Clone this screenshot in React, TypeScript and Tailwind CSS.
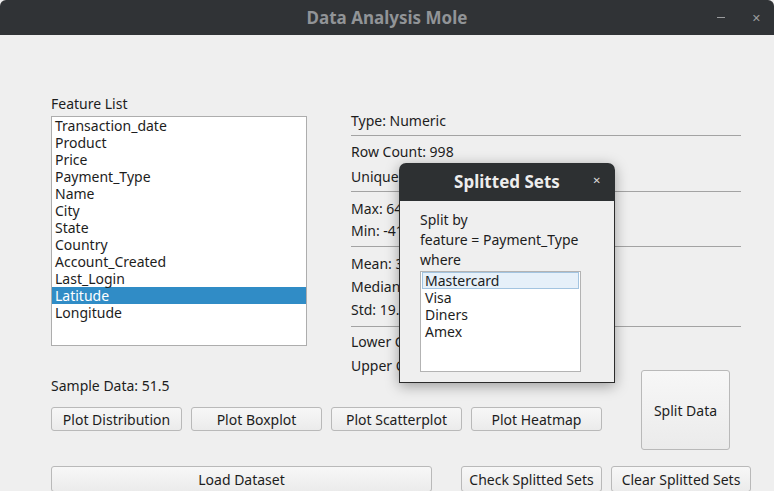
import React from 'react';

const features = [
  'Transaction_date',
  'Product',
  'Price',
  'Payment_Type',
  'Name',
  'City',
  'State',
  'Country',
  'Account_Created',
  'Last_Login',
  'Latitude',
  'Longitude',
];

const paymentTypes = ['Mastercard', 'Visa', 'Diners', 'Amex'];

const font = { fontFamily: '"Noto Sans", "DejaVu Sans", sans-serif' };

const Btn: React.FC<{ className?: string; children: React.ReactNode }> = ({ className = '', children }) => (
  <button
    className={`flex shrink-0 items-center justify-center rounded-[3px] border border-[#b9b9b9] bg-gradient-to-b from-[#f7f7f7] to-[#ebebeb] text-[14px] text-[#1d1d1d] ${className}`}
  >
    {children}
  </button>
);

const Sep: React.FC<{ className?: string }> = ({ className = '' }) => (
  <div className={`h-px w-full bg-[#a3a3a3] ${className}`} />
);

const App: React.FC = () => {
  return (
    <div className="flex h-[491px] w-[774px] flex-col overflow-hidden bg-[#efefef] text-[14px] text-[#1d1d1d]" style={font}>
      {/* Title bar */}
      <div className="relative flex h-[35px] shrink-0 items-center justify-center rounded-t-[6px] bg-[#303336]">
        <span className="text-[17px] font-bold text-[#919497]">Data Analysis Mole</span>
        <div className="absolute right-[13px] top-0 flex h-[35px] items-center gap-[27px]">
          <div className="h-px w-[8px] bg-[#9a9c9e]" />
          <span className="text-[11px] leading-none text-[#9a9c9e]">✕</span>
        </div>
      </div>

      {/* Body */}
      <div className="relative flex-1 pl-[51px]">
        {/* Top row */}
        <div className="mt-[59px] flex h-[276px] items-start">
          <div className="flex w-[256px] flex-col">
            <div className="h-[20px] leading-[20px]">Feature List</div>
            <div className="mt-[2px] h-[230px] border border-[#adadad] bg-white">
              {features.map((f) => (
                <div
                  key={f}
                  className={`h-[17px] pl-[3px] leading-[17px] ${f === 'Latitude' ? 'bg-[#308cc6] text-white' : ''}`}
                >
                  {f}
                </div>
              ))}
            </div>
          </div>

          <div className="ml-[44px] w-[390px] leading-[20px]">
            <div className="mt-[17px] h-[20px]">Type: Numeric</div>
            <Sep className="mt-[4px]" />
            <div className="mt-[6px] h-[20px]">Row Count: 998</div>
            <div className="mt-[5px] h-[20px]">Unique Values: 998</div>
            <Sep className="mt-[4px]" />
            <div className="mt-[7px] h-[20px]">Max: 64.8361111</div>
            <div className="mt-[2px] h-[20px]">Min: -41.1</div>
            <Sep className="mt-[5px]" />
            <div className="mt-[7px] h-[20px]">Mean: 39.8</div>
            <div className="mt-[3px] h-[20px]">Median: 42.3</div>
            <div className="mt-[3px] h-[20px]">Std: 19.2</div>
            <Sep className="mt-[6px]" />
            <div className="mt-[5px] h-[20px]">Lower Quartile: 38.1</div>
            <div className="mt-[4px] h-[20px]">Upper Quartile: 51.5</div>
          </div>
        </div>

        {/* Middle row */}
        <div className="flex items-start">
          <div className="flex flex-col">
            <div className="mt-[6px] h-[20px] leading-[20px]">Sample Data: 51.5</div>
            <div className="mt-[11px] flex gap-[9px]">
              <Btn className="h-[24px] w-[131px]">Plot Distribution</Btn>
              <Btn className="h-[24px] w-[131px]">Plot Boxplot</Btn>
              <Btn className="h-[24px] w-[131px]">Plot Scatterplot</Btn>
              <Btn className="h-[24px] w-[131px]">Plot Heatmap</Btn>
            </div>
          </div>
          <Btn className="ml-[39px] h-[80px] w-[89px]">Split Data</Btn>
        </div>

        {/* Bottom row */}
        <div className="mt-[16px] flex">
          <Btn className="h-[26px] w-[381px]">Load Dataset</Btn>
          <Btn className="ml-[29px] h-[26px] w-[141px]">Check Splitted Sets</Btn>
          <Btn className="ml-[9px] h-[26px] w-[140px]">Clear Splitted Sets</Btn>
        </div>

        {/* Splitted Sets dialog */}
        <div className="absolute left-[399px] top-[128px] flex h-[220px] w-[216px] flex-col rounded-t-[7px] shadow-[0_3px_14px_rgba(0,0,0,0.35)]">
          <div className="relative flex h-[38px] shrink-0 items-center justify-center rounded-t-[7px] bg-[#2d3032]">
            <span className="text-[17px] font-bold text-[#ededed]">Splitted Sets</span>
            <span className="absolute right-[14px] top-[12px] text-[10px] leading-none text-[#d8d8d8]">✕</span>
          </div>
          <div className="flex-1 border border-t-0 border-[#2b2b2b] bg-[#efefef] pl-[20px] pt-[9px]">
            <div className="h-[20px] leading-[20px]">Split by</div>
            <div className="h-[20px] leading-[20px]">feature = Payment_Type</div>
            <div className="h-[20px] leading-[20px]">where</div>
            <div className="mt-[1px] h-[101px] w-[161px] border border-[#b3b3b3] bg-white px-px">
              {paymentTypes.map((p, i) => (
                <div
                  key={p}
                  className={`h-[17px] pl-[2px] leading-[15px] ${i === 0 ? 'border border-[#a3c4e0] bg-[#e6f0f9]' : 'border border-transparent'}`}
                >
                  {p}
                </div>
              ))}
            </div>
          </div>
        </div>
      </div>
    </div>
  );
};

export default App;
